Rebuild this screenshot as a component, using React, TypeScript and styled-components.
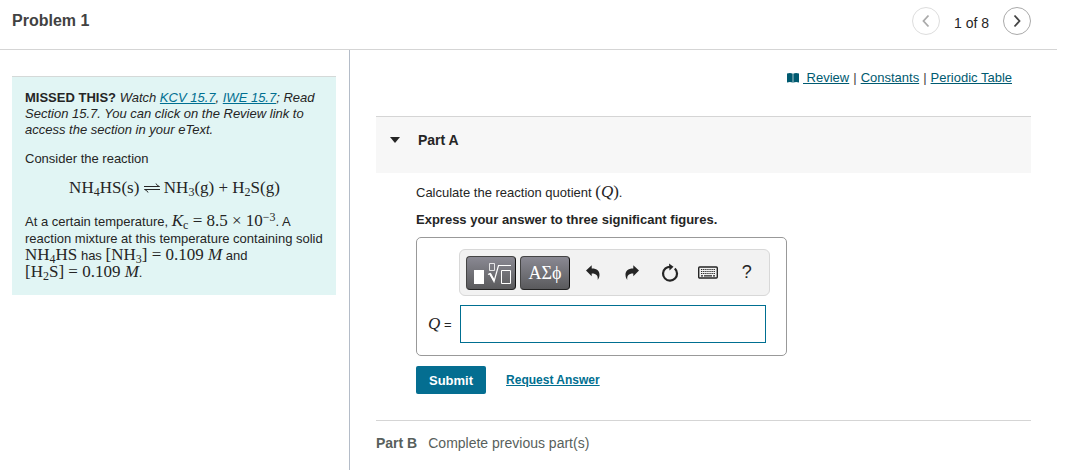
import React from 'react';
import styled, { createGlobalStyle } from 'styled-components';

const GlobalStyle = createGlobalStyle`
  *, *::before, *::after { box-sizing: border-box; }
  html, body { margin: 0; background: #fff; }
  body {
    font: 13px/16px "Liberation Sans", Arial, sans-serif;
    color: #252525;
  }
  p, h1, h2 { margin: 0; }
  button { font-family: inherit; margin: 0; cursor: pointer; }
  svg { display: block; }
`;

const Page = styled.div`
  min-height: 100vh;
  display: flex;
  flex-direction: column;
`;

const Header = styled.header`
  display: flex;
  justify-content: space-between;
  align-items: flex-start;
  height: 50px;
  margin-right: 10px;
  padding: 7px 26px 0 12px;
  border-bottom: 1px solid #d5d5d5;
`;

const Title = styled.h1`
  font-size: 16px;
  line-height: 28px;
  color: #424242;
`;

const Pager = styled.nav`
  display: flex;
  align-items: center;
  gap: 14px;
  font-size: 14px;
  line-height: 20px;

  span { padding-top: 4px; }
`;

const PageButton = styled.button<{ $tone: string; $edge: string }>`
  display: flex;
  align-items: center;
  justify-content: center;
  width: 28px;
  height: 28px;
  padding: 0;
  border: 1px solid ${(p) => p.$edge};
  border-radius: 50%;
  background: #fff;
  color: ${(p) => p.$tone};
`;

const Columns = styled.div`
  flex: 1;
  display: grid;
  grid-template-columns: 350px 1fr;
`;

const Sidebar = styled.aside`
  padding: 26px 13px 26px 12px;
  border-right: 1px solid #b4bcc8;
`;

const Card = styled.section`
  padding: 13px 12px 14px 13px;
  border-top: 1px solid #d5d9d8;
  background: #e1f5f4;
`;

const Hint = styled.p`
  font-style: italic;
  margin-bottom: 13px;

  strong { font-style: normal; }
`;

const Equation = styled.p`
  margin: 13px 0 16px;
  text-align: center;
  white-space: nowrap;
`;

const Details = styled.p`
  line-height: 17px;
`;

const MathText = styled.span`
  font-family: "Liberation Serif", "Times New Roman", serif;
  font-size: 17px;
  line-height: 16px;
  white-space: nowrap;

  sub, sup { font-size: 12px; line-height: 0; }
  sub { vertical-align: -3px; }
  sup { vertical-align: 5px; }
`;

const Harpoons = styled.svg`
  display: inline-block;
  vertical-align: 0;
`;

const Link = styled.a<{ $color?: string }>`
  color: ${(p) => p.$color ?? '#006f91'};
  text-decoration: underline;
`;

const Main = styled.main`
  padding: 20px 36px 16px 26px;
`;

const Resources = styled.nav`
  display: flex;
  justify-content: flex-end;
  align-items: center;
  gap: 4px;
  margin-bottom: 30px;
  padding-right: 19px;
  color: #444;

  a { white-space: pre; }
`;

const PartHeader = styled.header`
  display: flex;
  gap: 18px;
  height: 57px;
  padding: 15px 14px;
  border-top: 1px solid #d5d5d5;
  background: #f7f7f7;
`;

const PartTitle = styled.h2`
  font-size: 14px;
  line-height: 16px;
`;

const Toggle = styled.button`
  display: flex;
  align-items: center;
  height: 16px;
  padding: 0;
  border: 0;
  background: none;
  color: #252525;
`;

const PartBody = styled.div`
  padding: 11px 0 26px 40px;
`;

const Instruction = styled.p`
  margin: 11px 0 9px;
  font-weight: bold;
`;

const AnswerBox = styled.div`
  display: grid;
  grid-template-columns: 24px 311px;
  column-gap: 7px;
  row-gap: 9px;
  align-items: center;
  width: fit-content;
  padding: 11px 16px 12px 11px;
  border: 1px solid #999;
  border-radius: 5px;
`;

const Toolbar = styled.div`
  grid-column: 2;
  display: flex;
  align-items: center;
  gap: 4px;
  height: 47px;
  padding: 0 3px 0 6px;
  border: 1px solid #d8d8d8;
  border-radius: 6px;
  background: #f2f2f2;
`;

const PaletteButton = styled.button`
  display: flex;
  align-items: center;
  justify-content: center;
  width: 50px;
  height: 34px;
  padding: 0;
  border: 1px solid #444;
  border-right-color: #111;
  border-bottom-color: #222;
  border-radius: 4px;
  background: linear-gradient(#8a8993, #5a5a5c);
  color: #fff;
  font: 18px/20px "Liberation Serif", "Times New Roman", serif;
`;

const Tools = styled.div`
  flex: 1;
  display: flex;
  justify-content: space-around;
`;

const ToolButton = styled.button`
  display: flex;
  align-items: center;
  justify-content: center;
  width: 24px;
  height: 24px;
  padding: 0;
  border: 0;
  background: none;
  color: #252525;
  font-size: 18px;
`;

const AnswerLabel = styled.label`
  white-space: nowrap;

  i { font: italic 17px/20px "Liberation Serif", "Times New Roman", serif; }
`;

const AnswerInput = styled.input`
  width: 306px;
  height: 38px;
  margin-left: 1px;
  padding: 0 8px;
  border: 1px solid #006f91;
  background: #fff;
  font: 16px/20px "Liberation Serif", "Times New Roman", serif;
`;

const Actions = styled.div`
  display: flex;
  align-items: center;
  gap: 20px;
  margin-top: 10px;
  font-size: 12px;
  font-weight: bold;
`;

const SubmitButton = styled.button`
  height: 28px;
  padding: 0 13px;
  border: 0;
  border-radius: 2px;
  background: #046e91;
  color: #fff;
  font-size: 13px;
  font-weight: bold;
`;

const NextPart = styled.section`
  display: flex;
  gap: 11px;
  padding-top: 14px;
  border-top: 1px solid #d5d5d5;
  color: #585f5c;
  font-size: 14px;
`;

const Chevron = ({ d }: { d: string }) => (
  <svg width="12" height="14" viewBox="0 0 12 14" fill="none" stroke="currentColor" strokeWidth="1.8" aria-hidden="true">
    <path d={d} />
  </svg>
);

const BookIcon = () => (
  <svg width="12" height="10" viewBox="0 0 12 10" fill="#005a70" aria-hidden="true">
    <path d="M0 .5Q3-.3 5.600.5V9.500Q3 8.700 0 9.500zM6.400.5Q9-.3 12 .5v9Q9 8.700 6.400 9.500z" />
    <path d="M5.600 1h.8v9h-.8z" opacity=".5" />
  </svg>
);

const RootIcon = () => (
  <svg width="40" height="26" viewBox="0 0 40 26" fill="none" stroke="#fff" aria-hidden="true">
    <path d="M3 10h10v14H3z" fill="#fff" stroke="none" />
    <path d="M18.500 3.500h5v7h-5z" opacity=".8" />
    <path d="M17 14.500l2-1 4 8 4.500-16H40" strokeWidth="1.200" />
    <path d="M19 13.500l4 7" strokeWidth="2" />
    <path d="M30.500 10.500h9v13h-9z" />
  </svg>
);

const BentArrow = ({ flip = false }: { flip?: boolean }) => (
  <svg width="14" height="16" viewBox="0 0 14 16" fill="currentColor" aria-hidden="true">
    <path
      transform={flip ? 'matrix(-1 0 0 1 14 0)' : undefined}
      d="M0 5.500L5.700.3V3.400C10.800 3.300 13.800 6 13.500 10c-.1 2-.7 3.500-1.800 5 .5-4.300-1-6.500-6-6.500v2.700z"
    />
  </svg>
);

const ResetIcon = () => (
  <svg width="18" height="20" viewBox="0 0 18 20" fill="none" stroke="currentColor" strokeWidth="2.200" aria-hidden="true">
    <path d="M13.800 5.500A7 7 0 1 1 4.500 5.300Q6.500 3.800 9 3.800" />
    <path d="M8 .5L12.500 3.800 8.500 7.500z" fill="currentColor" stroke="none" />
  </svg>
);

const KeyboardIcon = () => (
  <svg width="20" height="13" viewBox="0 0 20 13" fill="none" stroke="currentColor" aria-hidden="true">
    <rect x=".7" y="1" width="18.600" height="11" rx="1" strokeWidth="1.400" />
    <path d="M3 3.500h14M3 5.500h14M3 7.500h14" strokeWidth="1.200" strokeDasharray="1.300 .8" />
    <path d="M3 9.800h2M6 9.800h8M15 9.800h2" strokeWidth="1.200" />
  </svg>
);

export default function App() {
  return (
    <Page>
      <GlobalStyle />
      <Header>
        <Title>Problem 1</Title>
        <Pager aria-label="Problems">
          <PageButton $tone="#aaa" $edge="#ddd" aria-label="Previous problem">
            <Chevron d="M8.500 1.500L3.500 7l5 5.500" />
          </PageButton>
          <span>1 of 8</span>
          <PageButton $tone="#444" $edge="#aaa" aria-label="Next problem">
            <Chevron d="M3.500 1.500l5 5.500-5 5.500" />
          </PageButton>
        </Pager>
      </Header>
      <Columns>
        <Sidebar>
          <Card>
            <Hint>
              <strong>MISSED THIS?</strong> Watch <Link href="#kcv">KCV 15.7</Link>, <Link href="#iwe">IWE 15.7</Link>; Read
              Section 15.7. You can click on the Review link to access the section in your eText.
            </Hint>
            <p>Consider the reaction</p>
            <Equation>
              <MathText>
                NH<sub>4</sub>HS(s){' '}
                <Harpoons width="16" height="10" viewBox="0 0 16 10" fill="none" stroke="currentColor" role="img" aria-label="is in equilibrium with">
                  <path d="M0 3.500h15.500Q13 3 12 .5M16 6.500H.5Q3 7 4 9.500" />
                </Harpoons>
                {' '}NH<sub>3</sub>(g) + H<sub>2</sub>S(g)
              </MathText>
            </Equation>
            <Details>
              At a certain temperature,{' '}
              <MathText>
                <i>K</i><sub>c</sub> = 8.5 × 10<sup>−3</sup>
              </MathText>
              . A reaction mixture at this temperature containing solid{' '}
              <MathText>NH<sub>4</sub>HS</MathText> has{' '}
              <MathText>[NH<sub>3</sub>] = 0.109 <i>M</i></MathText> and{' '}
              <MathText>[H<sub>2</sub>S] = 0.109 <i>M</i></MathText>.
            </Details>
          </Card>
        </Sidebar>
        <Main>
          <Resources aria-label="Resources">
            <BookIcon />
            <Link $color="#005a70" href="#review">{' Review'}</Link>|
            <Link $color="#005a70" href="#constants">Constants</Link>|
            <Link $color="#005a70" href="#table">Periodic Table</Link>
          </Resources>
          <PartHeader>
            <Toggle aria-label="Collapse Part A">
              <svg width="10" height="6" viewBox="0 0 10 6" fill="currentColor" aria-hidden="true">
                <path d="M0 0h10L5 6z" />
              </svg>
            </Toggle>
            <PartTitle>Part A</PartTitle>
          </PartHeader>
          <PartBody>
            <p>
              Calculate the reaction quotient <MathText>(<i>Q</i>)</MathText>.
            </p>
            <Instruction>Express your answer to three significant figures.</Instruction>
            <AnswerBox>
              <Toolbar>
                <PaletteButton aria-label="Templates"><RootIcon /></PaletteButton>
                <PaletteButton>ΑΣϕ</PaletteButton>
                <Tools>
                  <ToolButton aria-label="Undo"><BentArrow /></ToolButton>
                  <ToolButton aria-label="Redo"><BentArrow flip /></ToolButton>
                  <ToolButton aria-label="Reset"><ResetIcon /></ToolButton>
                  <ToolButton aria-label="Keyboard shortcuts"><KeyboardIcon /></ToolButton>
                  <ToolButton>?</ToolButton>
                </Tools>
              </Toolbar>
              <AnswerLabel htmlFor="answer"><i>Q</i> =</AnswerLabel>
              <AnswerInput id="answer" type="text" />
            </AnswerBox>
            <Actions>
              <SubmitButton>Submit</SubmitButton>
              <Link href="#answer">Request Answer</Link>
            </Actions>
          </PartBody>
          <NextPart>
            <strong>Part B</strong>
            <span>Complete previous part(s)</span>
          </NextPart>
        </Main>
      </Columns>
    </Page>
  );
}
